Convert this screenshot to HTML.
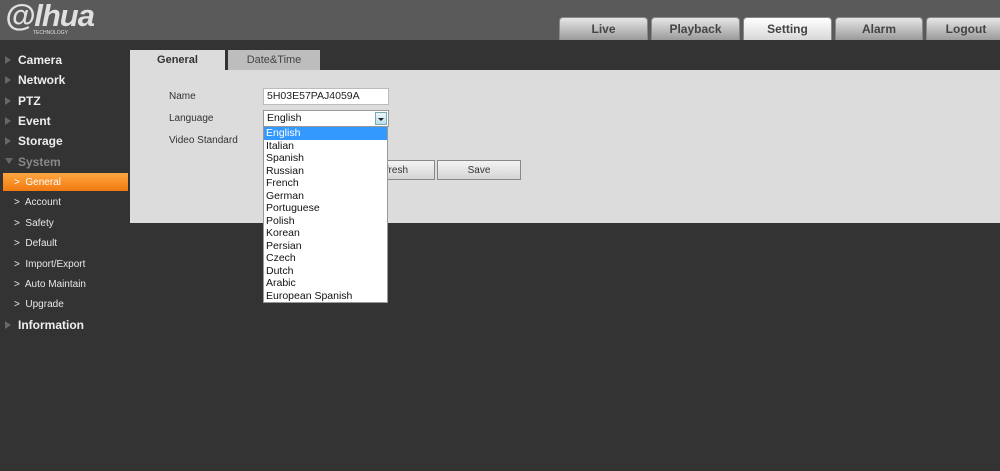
<!DOCTYPE html>
<html><head><style>
*{margin:0;padding:0;box-sizing:border-box}
body{width:1000px;height:471px;background:#333;font-family:"Liberation Sans",Arial,sans-serif;position:relative;overflow:hidden}
.a{position:absolute}
#hdr{left:0;top:0;width:1000px;height:40px;background:#5a5a5a}
.tt{top:17px;height:23px;border-radius:4px 4px 0 0;background:linear-gradient(#e6e6e6,#9a9a9a);border:1px solid #888;border-bottom:none;font-weight:bold;font-size:12px;color:#444;text-align:center;line-height:22px}
.tt.on{background:linear-gradient(#fff,#d8d8d8)}
.sb{left:18px;font-size:12px;font-weight:bold;color:#eee}
.sb2{left:14px;font-size:10px;color:#e8e8e8}
.tri{left:5px;width:0;height:0;border-left:6px solid #666;border-top:4px solid transparent;border-bottom:4px solid transparent}
.lbl{font-size:10px;color:#333}
.dd div{height:12.5px;line-height:12.5px;font-size:10.5px;padding-left:2px;color:#111}
.btn{top:160px;height:20px;border:1px solid #888;background:linear-gradient(#f4f4f4,#d4d4d4);font-size:10px;text-align:center;line-height:20px;color:#333}
</style></head><body>
<div id="hdr" class="a"></div>
<div class="a" style="left:5px;top:-2px;font-size:31px;font-style:italic;font-weight:bold;color:#e0e0e0;letter-spacing:-1px">@lhua</div>
<div class="a" style="left:33px;top:30px;font-size:5px;color:#ddd">TECHNOLOGY</div>
<div class="a tt" style="left:559px;width:89px">Live</div>
<div class="a tt" style="left:651px;width:89px">Playback</div>
<div class="a tt on" style="left:743px;width:89px">Setting</div>
<div class="a tt" style="left:835px;width:88px">Alarm</div>
<div class="a tt" style="left:926px;width:80px">Logout</div>

<div class="a tri" style="top:56px"></div><div class="a sb" style="top:53px">Camera</div>
<div class="a tri" style="top:76px"></div><div class="a sb" style="top:73px">Network</div>
<div class="a tri" style="top:97px"></div><div class="a sb" style="top:94px">PTZ</div>
<div class="a tri" style="top:117px"></div><div class="a sb" style="top:114px">Event</div>
<div class="a tri" style="top:137px"></div><div class="a sb" style="top:134px">Storage</div>
<div class="a" style="left:5px;top:158px;border-top:6px solid #666;border-left:4px solid transparent;border-right:4px solid transparent;width:0"></div><div class="a sb" style="top:155px;color:#888">System</div>
<div class="a" style="left:3px;top:173px;width:125px;height:18px;background:linear-gradient(#ffa640,#f07a10)"></div>
<div class="a sb2" style="top:177px;color:#fff">&gt;&nbsp; General</div>
<div class="a sb2" style="top:197px">&gt;&nbsp; Account</div>
<div class="a sb2" style="top:218px">&gt;&nbsp; Safety</div>
<div class="a sb2" style="top:238px">&gt;&nbsp; Default</div>
<div class="a sb2" style="top:259px">&gt;&nbsp; Import/Export</div>
<div class="a sb2" style="top:279px">&gt;&nbsp; Auto Maintain</div>
<div class="a sb2" style="top:299px">&gt;&nbsp; Upgrade</div>
<div class="a tri" style="top:321px"></div><div class="a sb" style="top:318px">Information</div>

<div class="a" style="left:130px;top:70px;width:870px;height:153px;background:#dcdcdc"></div>
<div class="a" style="left:130px;top:50px;width:95px;height:20px;background:#dcdcdc;font-size:11px;font-weight:bold;color:#333;text-align:center;line-height:20px">General</div>
<div class="a" style="left:228px;top:50px;width:92px;height:20px;background:#bdbdbd;font-size:11px;color:#444;text-align:center;line-height:20px">Date&amp;Time</div>
<div class="a lbl" style="left:169px;top:91px">Name</div>
<div class="a lbl" style="left:169px;top:113px">Language</div>
<div class="a lbl" style="left:169px;top:135px">Video Standard</div>
<div class="a" style="left:263px;top:88px;width:126px;height:17px;background:#fff;border:1px solid #bbb;font-size:10.5px;line-height:15px;padding-left:3px;color:#222">5H03E57PAJ4059A</div>
<div class="a" style="left:263px;top:110px;width:126px;height:17px;background:#fff;border:1px solid #999;font-size:10.5px;line-height:15px;padding-left:3px;color:#111">English</div>
<div class="a" style="left:375px;top:112px;width:12px;height:13px;background:linear-gradient(#eef6fb,#bcdcec);border:1px solid #7aa;"><div style="margin:5px auto 0;width:0;border-top:3px solid #222;border-left:3px solid transparent;border-right:3px solid transparent"></div></div>
<div class="a btn" style="left:263px;width:172px;text-align:right;padding-right:26px">Refresh</div>
<div class="a btn" style="left:437px;width:84px">Save</div>
<div class="a dd" style="left:263px;top:126px;width:125px;height:177px;background:#fff;border:1px solid #999">
<div style="background:#3399ff;color:#fff">English</div><div>Italian</div><div>Spanish</div><div>Russian</div><div>French</div><div>German</div><div>Portuguese</div><div>Polish</div><div>Korean</div><div>Persian</div><div>Czech</div><div>Dutch</div><div>Arabic</div><div>European Spanish</div>
</div>
</body></html>
